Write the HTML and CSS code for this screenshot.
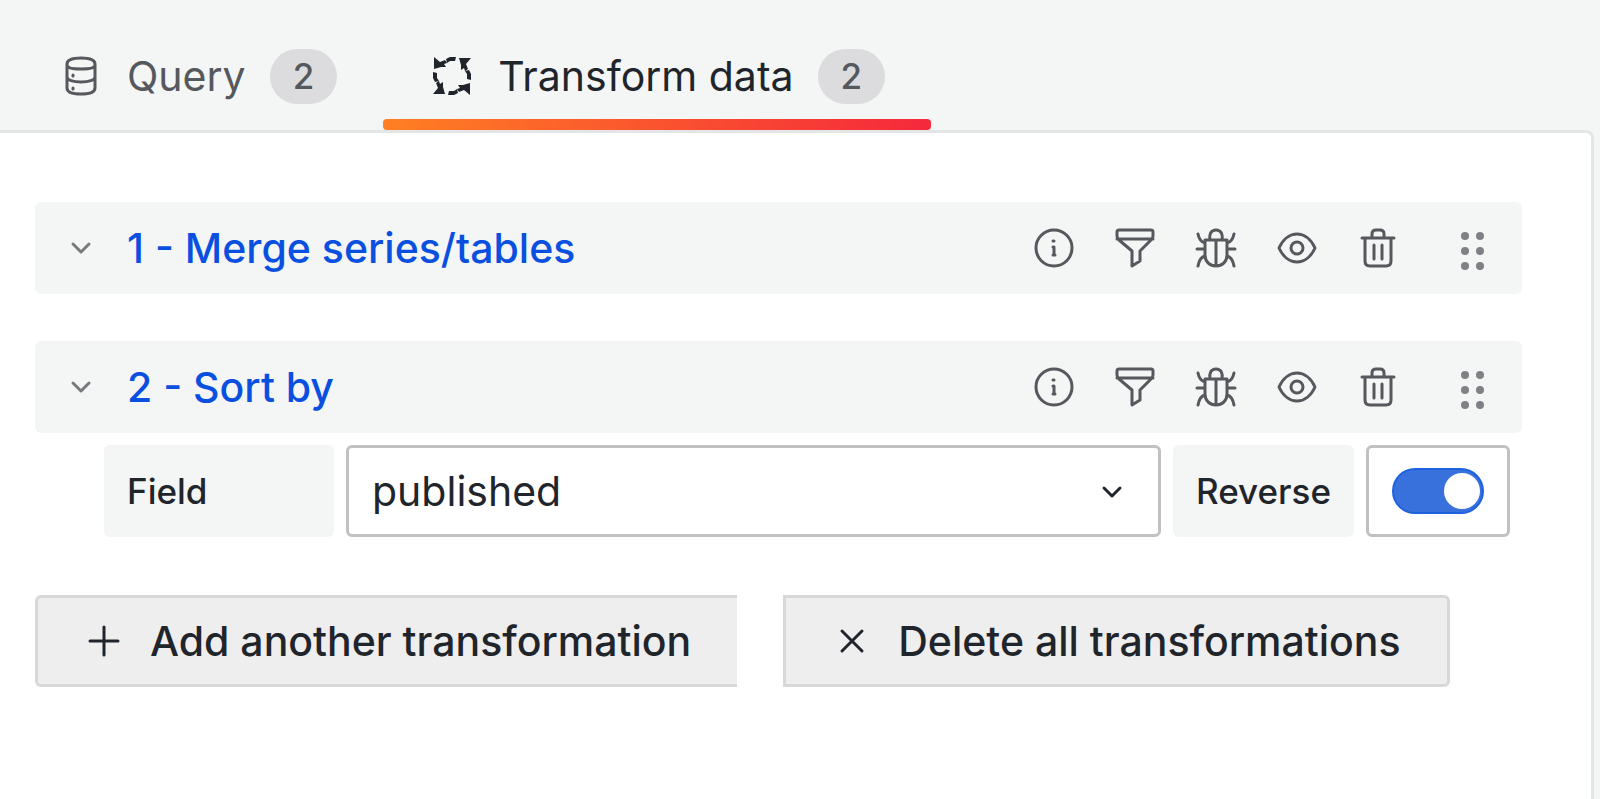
FILE: index.html
```html
<!DOCTYPE html>
<html lang="en">
<head>
<meta charset="utf-8">
<title>Transform data</title>
<link rel="stylesheet" href="styles.css">
</head>
<body>
<svg class="sprite" aria-hidden="true">
  <symbol id="angle" viewBox="0 0 46 46"><path d="M15 19l8 8 8-8"/></symbol>
  <symbol id="info" viewBox="0 0 46 46"><circle cx="23" cy="23" r="18"/><path d="M22 22h1v8M22 30h2M22 16h1"/></symbol>
  <symbol id="filter" viewBox="0 0 46 46"><path d="M7 5h32q2 0 2 2v4q0 2-2 4L28 26v10l-8 5V26L7 15q-2-2-2-4V7q0-2 2-2zM5 14h36"/></symbol>
  <symbol id="bug" viewBox="0 0 46 46"><path d="M12 15h22v15c0 7-5 11-11 11s-11-4-11-11zM17 15c-1-6 1-10 6-10s7 4 6 10M23 15v26M12 18c-4-1-6-4-7-9M34 18c4-1 6-4 7-9M4 24h8M34 24h8M12 31c-4 1-6 4-7 10M34 31c4 1 6 4 7 10"/></symbol>
  <symbol id="eye" viewBox="0 0 46 46"><path d="M5 23C9 14 16 9 23 9S37 14 41 23C37 32 30 37 23 37S9 32 5 23z"/><circle cx="23" cy="23" r="6"/></symbol>
  <symbol id="trash" viewBox="0 0 46 46"><path d="M7 13h32M10 13v23q0 5 5 5h16q5 0 5-5V13M17 12V9q0-4 4-4h4q4 0 4 4v3M19 20v14M27 20v14"/></symbol>
  <symbol id="grip" viewBox="0 0 46 46"><g class="dots"><circle cx="16" cy="11" r="4"/><circle cx="31" cy="11" r="4"/><circle cx="16" cy="26" r="4"/><circle cx="31" cy="26" r="4"/><circle cx="16" cy="41" r="4"/><circle cx="31" cy="41" r="4"/></g></symbol>
  <symbol id="arrow" viewBox="0 0 46 46"><path class="solid" d="M5 4l6 5 5-2 2 3-3 1 2 3-5 0-7 2zM17 6l4-2 6 0-1 4-5 0-3 2z"/></symbol>
</svg>

<nav class="tabs">
  <a class="tab" href="#query">
    <svg class="icon" viewBox="0 0 46 46"><path d="M9 11c0-4 6-6 14-6s14 2 14 6v24c0 4-6 6-14 6S9 39 9 35zM9 12c0 3 6 4 14 4s14-1 14-4M9 24c0 3 6 5 14 5s14-2 14-5"/><path d="M15 22v1M15 35v1"/></svg>
    <span>Query</span><span class="badge">2</span>
  </a>
  <a class="tab active" href="#transform" aria-current="page">
    <svg class="icon" viewBox="0 0 46 46"><use href="#arrow" width="46" height="46"/><use href="#arrow" width="46" height="46" transform="rotate(90 23 23)"/><use href="#arrow" width="46" height="46" transform="rotate(180 23 23)"/><use href="#arrow" width="46" height="46" transform="rotate(270 23 23)"/></svg>
    <span>Transform data</span><span class="badge">2</span>
  </a>
</nav>

<main class="panel">
  <section class="card">
    <header class="row">
      <button class="icon-btn toggle" aria-label="Collapse"><svg class="icon"><use href="#angle"/></svg></button>
      <h2 class="title">1 - Merge series/tables</h2>
      <div class="actions">
        <button class="icon-btn" aria-label="Info"><svg class="icon"><use href="#info"/></svg></button>
        <button class="icon-btn" aria-label="Filter"><svg class="icon"><use href="#filter"/></svg></button>
        <button class="icon-btn" aria-label="Debug"><svg class="icon"><use href="#bug"/></svg></button>
        <button class="icon-btn" aria-label="Disable"><svg class="icon"><use href="#eye"/></svg></button>
        <button class="icon-btn" aria-label="Remove"><svg class="icon"><use href="#trash"/></svg></button>
      </div>
      <button class="icon-btn grip" aria-label="Drag"><svg class="icon"><use href="#grip"/></svg></button>
    </header>
  </section>

  <section class="card">
    <header class="row">
      <button class="icon-btn toggle" aria-label="Collapse"><svg class="icon"><use href="#angle"/></svg></button>
      <h2 class="title">2 - Sort by</h2>
      <div class="actions">
        <button class="icon-btn" aria-label="Info"><svg class="icon"><use href="#info"/></svg></button>
        <button class="icon-btn" aria-label="Filter"><svg class="icon"><use href="#filter"/></svg></button>
        <button class="icon-btn" aria-label="Debug"><svg class="icon"><use href="#bug"/></svg></button>
        <button class="icon-btn" aria-label="Disable"><svg class="icon"><use href="#eye"/></svg></button>
        <button class="icon-btn" aria-label="Remove"><svg class="icon"><use href="#trash"/></svg></button>
      </div>
      <button class="icon-btn grip" aria-label="Drag"><svg class="icon"><use href="#grip"/></svg></button>
    </header>
    <div class="fields">
      <label class="label wide" for="field">Field</label>
      <div class="select-wrap">
        <select id="field" class="select"><option>published</option></select>
        <svg class="icon select-arrow"><use href="#angle"/></svg>
      </div>
      <label class="label" for="reverse">Reverse</label>
      <div class="switch-box"><input id="reverse" class="switch" type="checkbox" role="switch" checked></div>
    </div>
  </section>

  <div class="buttons">
    <button class="btn first"><svg class="icon" viewBox="0 0 46 46"><path d="M23 9v28M9 23h28"/></svg>Add another transformation</button>
    <button class="btn last"><svg class="icon" viewBox="0 0 46 46"><path d="M13 13l20 20M33 13L13 33"/></svg>Delete all transformations</button>
  </div>
</main>
</body>
</html>
```
FILE: styles.css
```css
* { box-sizing: border-box; }
body {
  margin: 0;
  min-height: 100vh;
  display: flex;
  flex-direction: column;
  background: #f4f5f5;
  color: #1f252b;
  font-family: Inter, "Liberation Sans", sans-serif;
  font-size: 41px;
  line-height: 48px;
}
button, select { font: inherit; color: inherit; }
.sprite { display: none; }
.icon {
  width: 46px;
  height: 46px;
  flex: none;
  display: block;
  fill: none;
  stroke: currentColor;
  stroke-width: 3;
  stroke-linecap: round;
  stroke-linejoin: round;
}
.dots, .solid { fill: currentColor; stroke: none; }

.tabs { display: flex; height: 130px; padding-top: 22px; }
.tab {
  position: relative;
  display: flex;
  align-items: center;
  padding: 0 46px 0 58px;
  color: #55585d;
  text-decoration: none;
}
.tab .icon { margin-right: 23px; }
.tab.active { padding: 0 46px; color: #1f252b; }
.tab.active::after {
  content: "";
  position: absolute;
  left: 0;
  right: 0;
  bottom: 0;
  height: 11px;
  border-radius: 4px;
  background: linear-gradient(90deg, #ff7f22, #f5283c);
}
.badge {
  margin-left: 24px;
  padding: 4px 23px;
  border-radius: 28px;
  background: #dcdcde;
  color: #55585d;
  font-size: 35px;
  line-height: 47px;
  font-weight: 500;
}

.panel {
  flex: 1;
  margin-right: 6px;
  padding: 69px 69px 0 35px;
  background: #fff;
  border: solid #e4e5e6;
  border-width: 3px 3px 0 0;
  border-top-right-radius: 8px;
}
.card { margin-bottom: 47px; }
.row {
  display: flex;
  align-items: center;
  height: 92px;
  padding: 0 27px 0 23px;
  background: #f4f5f5;
  border-radius: 6px;
}
.icon-btn {
  padding: 0;
  border: 0;
  background: none;
  color: #55585d;
}
.toggle { margin-right: 23px; color: #77797c; }
.grip { color: #7f8184; }
.title {
  flex: 1;
  margin: 0;
  color: #0a50e0;
  font-size: 41px;
  font-weight: 500;
}
.actions { display: flex; gap: 35px; margin-right: 48px; }

.fields {
  display: flex;
  gap: 12px;
  margin-top: 12px;
  padding: 0 12px 0 69px;
}
.label {
  display: flex;
  align-items: center;
  height: 92px;
  padding: 0 23px;
  border-radius: 6px;
  background: #f4f5f5;
  font-size: 35px;
  font-weight: 500;
}
.wide { width: 230px; }
.select-wrap { position: relative; flex: 1; }
.select {
  appearance: none;
  width: 100%;
  height: 92px;
  padding: 0 23px;
  border: 3px solid #c0c1c3;
  border-radius: 6px;
  background: #fff;
}
.select-arrow { position: absolute; right: 26px; top: 24px; pointer-events: none; }
.switch-box {
  display: flex;
  align-items: center;
  height: 92px;
  padding: 0 23px;
  border: 3px solid #c0c1c3;
  border-radius: 6px;
}
.switch {
  appearance: none;
  display: flex;
  align-items: center;
  justify-content: flex-end;
  width: 92px;
  height: 46px;
  margin: 0;
  padding-right: 2px;
  border: 2px solid #1f62e0;
  border-radius: 23px;
  background: #3871dc;
}
.switch::before {
  content: "";
  width: 36px;
  height: 36px;
  border-radius: 50%;
  background: #fff;
}

.buttons { display: flex; gap: 46px; margin-top: 58px; }
.btn {
  display: flex;
  align-items: center;
  gap: 23px;
  height: 92px;
  padding: 0 46px 0 43px;
  border: 3px solid #d7d9d9;
  background: #eeeeee;
  font-weight: 500;
}
.first { border-right: 0; border-radius: 6px 0 0 6px; }
.last { border-radius: 0 6px 6px 0; }
```
